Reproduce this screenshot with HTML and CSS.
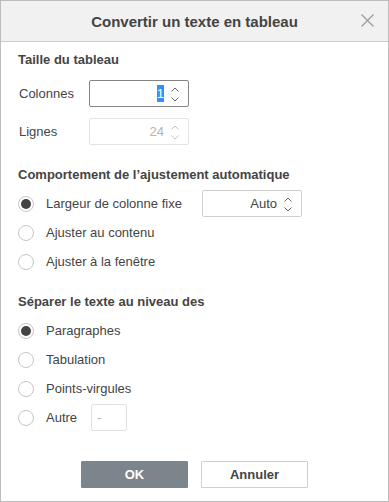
FILE: index.html
```html
<!DOCTYPE html>
<html>
<head>
    <title>Convertir un texte en tableau</title>
    <link rel="stylesheet" href="styles.css">
</head>
<body>
    <div class="dialog">
        <div class="header">
            <span class="title">Convertir un texte en tableau</span>
            <button class="close" title="Fermer">
                <svg width="13" height="13" viewBox="0 0 13 13"><path d="M0.5 0.5 L12.5 12.5 M12.5 0.5 L0.5 12.5" stroke="#9a9a9a" stroke-width="1.2" fill="none"/></svg>
            </button>
        </div>

        <div class="content">
            <!-- Taille -->
            <div class="section-title">Taille du tableau</div>
            <div class="field-row">
                <span class="field-label">Colonnes</span>
                <div class="spin focused">
                    <span class="value"><span class="selected">1</span></span>
                    <span class="arrows">
                        <svg width="8" height="5" viewBox="0 0 8 5"><path d="M0.5 4.5 L4 1 L7.5 4.5" stroke="#666" fill="none"/></svg>
                        <svg width="8" height="5" viewBox="0 0 8 5"><path d="M0.5 0.5 L4 4 L7.5 0.5" stroke="#666" fill="none"/></svg>
                    </span>
                </div>
            </div>
            <div class="field-row second">
                <span class="field-label">Lignes</span>
                <div class="spin disabled">
                    <span class="value">24</span>
                    <span class="arrows">
                        <svg width="8" height="5" viewBox="0 0 8 5"><path d="M0.5 4.5 L4 1 L7.5 4.5" stroke="#c4c4c4" fill="none"/></svg>
                        <svg width="8" height="5" viewBox="0 0 8 5"><path d="M0.5 0.5 L4 4 L7.5 0.5" stroke="#c4c4c4" fill="none"/></svg>
                    </span>
                </div>
            </div>

            <!-- Ajustement -->
            <div class="section-title gap-big">Comportement de l’ajustement automatique</div>
            <div class="radio-list first">
                <div class="radio-row">
                    <span class="radio checked"></span>
                    <span class="radio-label fixed">Largeur de colonne fixe</span>
                    <div class="spin">
                        <span class="value">Auto</span>
                        <span class="arrows">
                            <svg width="8" height="5" viewBox="0 0 8 5"><path d="M0.5 4.5 L4 1 L7.5 4.5" stroke="#666" fill="none"/></svg>
                            <svg width="8" height="5" viewBox="0 0 8 5"><path d="M0.5 0.5 L4 4 L7.5 0.5" stroke="#666" fill="none"/></svg>
                        </span>
                    </div>
                </div>
                <div class="radio-row">
                    <span class="radio"></span>
                    <span class="radio-label">Ajuster au contenu</span>
                </div>
                <div class="radio-row">
                    <span class="radio"></span>
                    <span class="radio-label">Ajuster à la fenêtre</span>
                </div>
            </div>

            <!-- Séparateur -->
            <div class="section-title gap-sep">Séparer le texte au niveau des</div>
            <div class="radio-list">
                <div class="radio-row">
                    <span class="radio checked"></span>
                    <span class="radio-label">Paragraphes</span>
                </div>
                <div class="radio-row">
                    <span class="radio"></span>
                    <span class="radio-label">Tabulation</span>
                </div>
                <div class="radio-row">
                    <span class="radio"></span>
                    <span class="radio-label">Points-virgules</span>
                </div>
                <div class="radio-row">
                    <span class="radio"></span>
                    <span class="radio-label">Autre</span>
                    <div class="small-input">-</div>
                </div>
            </div>
        </div>

        <div class="footer">
            <button class="btn primary">OK</button>
            <button class="btn">Annuler</button>
        </div>
    </div>
</body>
</html>
```

FILE: styles.css
```css
body {
    font-family: 'Liberation Sans', Arial, sans-serif;
    margin: 0;
    padding: 0;
    background: white;
    color: #444;
    font-size: 13px;
}
.dialog {
    width: 389px;
    height: 502px;
    box-sizing: border-box;
    border: 1px solid #bdbdbd;
    background: white;
    display: flex;
    flex-direction: column;
}
.header {
    position: relative;
    height: 40px;
    background: #f1f1f1;
    border-bottom: 1px solid #cbcbcb;
    display: flex;
    align-items: center;
    justify-content: center;
}
.title {
    font-size: 15px;
    font-weight: bold;
    color: #444;
}
.close {
    position: absolute;
    right: 14px;
    top: 13px;
    width: 13px;
    height: 13px;
    padding: 0;
    border: none;
    background: none;
    display: flex;
}
.content {
    padding: 10px 17px 0 17px;
    display: flex;
    flex-direction: column;
}
.section-title {
    font-weight: bold;
    line-height: 16px;
    height: 16px;
}
.section-title.gap-big {
    margin-top: 22px;
}
.section-title.gap-sep {
    margin-top: 18px;
}
.field-row {
    display: flex;
    align-items: center;
    margin-top: 12px;
}
.field-row.second {
    margin-top: 11px;
}
.field-label {
    width: 71px;
    padding-left: 1px;
    box-sizing: border-box;
}
.spin {
    width: 100px;
    height: 27px;
    box-sizing: border-box;
    border: 1px solid #cfcfcf;
    border-radius: 2px;
    display: flex;
    align-items: center;
    justify-content: flex-end;
}
.spin.focused {
    border-color: #848484;
}
.spin.disabled {
    border-color: #e3e3e3;
    color: #b3b3b3;
}
.spin .value {
    margin-right: 7px;
}
.selected {
    background: #3390ff;
    color: white;
    padding: 1px 0;
}
.spin .arrows {
    width: 17px;
    display: flex;
    flex-direction: column;
    align-items: flex-start;
    gap: 5px;
    margin-top: 1px;
}
.spin .arrows svg {
    display: block;
}
.radio-list {
    display: flex;
    flex-direction: column;
    margin-top: 6px;
}
.radio-row {
    height: 29px;
    display: flex;
    align-items: center;
}
.radio {
    width: 16px;
    height: 16px;
    box-sizing: border-box;
    border: 1px solid #c6c6c6;
    border-radius: 50%;
    margin-right: 12px;
    display: flex;
    align-items: center;
    justify-content: center;
    flex-shrink: 0;
}
.radio.checked::after {
    content: "";
    width: 10px;
    height: 10px;
    border-radius: 50%;
    background: #444;
}
.radio-label.fixed {
    width: 156px;
}
.small-input {
    width: 36px;
    height: 27px;
    box-sizing: border-box;
    border: 1px solid #e0e0e0;
    border-radius: 2px;
    margin-left: 14px;
    padding-left: 5px;
    color: #b3b3b3;
    line-height: 25px;
}
.footer {
    display: flex;
    justify-content: center;
    gap: 13px;
    margin-top: 29px;
}
.btn {
    width: 107px;
    height: 27px;
    font-family: 'Liberation Sans', Arial, sans-serif;
    font-size: 13px;
    font-weight: bold;
    color: #444;
    background: white;
    border: 1px solid #cfcfcf;
    border-radius: 1px;
    padding: 0;
}
.btn.primary {
    background: #7d858c;
    border-color: #7d858c;
    color: white;
}
```
